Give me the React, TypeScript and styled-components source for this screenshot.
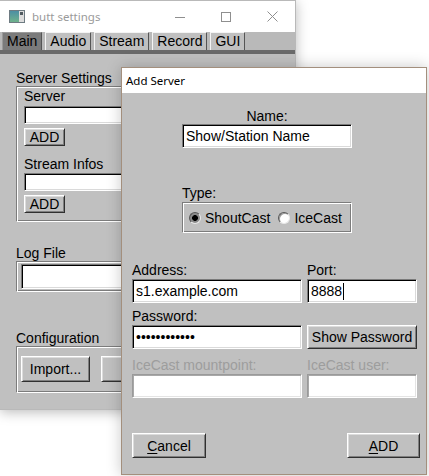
import React from 'react';
import styled, { createGlobalStyle } from 'styled-components';

const GlobalStyle = createGlobalStyle`
  html, body {
    margin: 0;
    padding: 0;
    background: #ffffff;
  }
  body {
    font-family: "Liberation Sans", Arial, sans-serif;
    font-size: 14px;
    color: #000;
  }
  * { box-sizing: border-box; }
`;

const Desktop = styled.div`
  position: relative;
  width: 429px;
  height: 476px;
  overflow: hidden;
  background: #ffffff;
`;

/* ---------- shared FLTK-ish widgets ---------- */

const Label = styled.div<{ $disabled?: boolean; $center?: boolean }>`
  height: 16px;
  line-height: 16px;
  white-space: nowrap;
  color: ${p => (p.$disabled ? '#9d9d9d' : '#000')};
  text-align: ${p => (p.$center ? 'center' : 'left')};
`;

const TextField = styled.div<{ $w?: number; $h?: number; $disabled?: boolean }>`
  width: ${p => (p.$w ? `${p.$w}px` : '100%')};
  height: ${p => p.$h ?? 24}px;
  background: #ffffff;
  border: 1px solid;
  border-color: ${p => (p.$disabled ? '#9a9a9a #ffffff #ffffff #9a9a9a' : '#7a7a7a #ffffff #ffffff #7a7a7a')};
  box-shadow: ${p =>
    p.$disabled
      ? 'inset 1px 1px 0 #a8a8a8, inset -1px -1px 0 #e4e4e4'
      : 'inset 1px 1px 0 #000000, inset -1px -1px 0 #dadada'};
  padding: 0 0 0 3px;
  display: flex;
  align-items: center;
  white-space: nowrap;
  overflow: hidden;
  flex-shrink: 0;
`;

const Caret = styled.span`
  display: inline-block;
  width: 1px;
  height: 17px;
  background: #000;
  margin-left: 1px;
`;

const Button = styled.div<{ $w: number; $h: number }>`
  width: ${p => p.$w}px;
  height: ${p => p.$h}px;
  background: #c0c0c0;
  border: 1px solid;
  border-color: #ffffff #303030 #303030 #ffffff;
  box-shadow: inset 1px 1px 0 #dcdcdc, inset -1px -1px 0 #7f7f7f;
  display: flex;
  align-items: center;
  justify-content: center;
  white-space: nowrap;
  flex-shrink: 0;
`;

const Groove = styled.div`
  border: 1px solid;
  border-color: #7c7c7c #ffffff #ffffff #7c7c7c;
  box-shadow: inset 1px 1px 0 #ffffff, inset -1px -1px 0 #7c7c7c;
`;

const Accel = styled.span`
  text-decoration: underline;
  text-underline-offset: 2px;
`;

/* ---------- main "butt settings" window ---------- */

const MainWindow = styled.div`
  position: absolute;
  left: 0;
  top: 0;
  width: 296px;
  height: 410px;
  border: 1px solid #b9b9b9;
  border-left: none;
  background: #c0c0c0;
  box-shadow: 0 2px 12px rgba(0, 0, 0, 0.28);
  display: flex;
  flex-direction: column;
`;

const TitleBar = styled.div`
  height: 31px;
  background: #ffffff;
  display: flex;
  align-items: center;
  flex-shrink: 0;
`;

const AppIcon = styled.svg`
  margin-left: 9px;
  flex-shrink: 0;
`;

const WindowTitle = styled.div`
  margin-left: 7px;
  font-family: "Noto Sans", "Open Sans", sans-serif;
  font-size: 11.5px;
  color: #9a9a9a;
  flex: 1;
`;

const CaptionButton = styled.div`
  width: 46px;
  height: 31px;
  display: flex;
  align-items: center;
  justify-content: center;
`;

const TabBar = styled.div`
  height: 18px;
  background: #b9b9b9;
  display: flex;
  gap: 3px;
  padding-left: 2px;
  flex-shrink: 0;
`;

const Tab = styled.div<{ $active?: boolean }>`
  height: 18px;
  padding: 0 4px;
  line-height: 17px;
  background: ${p => (p.$active ? '#7b7b7b' : '#c0c0c0')};
  border-top: 1px solid ${p => (p.$active ? '#9a9a9a' : '#f4f4f4')};
  border-left: 1px solid ${p => (p.$active ? '#9a9a9a' : '#f4f4f4')};
  border-right: 1px solid #555;
`;

const TabRule = styled.div`
  height: 4px;
  background: #6a6a6a;
  flex-shrink: 0;
`;

const MainBody = styled.div`
  padding: 16px 0 0 16px;
  display: flex;
  flex-direction: column;
`;

const GroupFrame = styled(Groove)<{ $pad: string }>`
  width: 264px;
  padding: ${p => p.$pad};
  display: flex;
  flex-direction: column;
`;

const Spaced = styled.div<{ $mt: number }>`
  margin-top: ${p => p.$mt}px;
`;

const ButtonRow = styled.div`
  display: flex;
  gap: 11px;
`;

/* ---------- "Add Server" dialog ---------- */

const Dialog = styled.div`
  position: absolute;
  left: 121px;
  top: 67px;
  width: 306px;
  height: 408px;
  border: 1px solid #a38f7d;
  background: #c0c0c0;
  box-shadow: 0 0 14px rgba(0, 0, 0, 0.22);
  display: flex;
  flex-direction: column;
`;

const DialogTitle = styled.div`
  height: 25px;
  background: #ffffff;
  padding-left: 4px;
  display: flex;
  align-items: center;
  font-family: "Noto Sans", "Open Sans", sans-serif;
  font-size: 11.5px;
  color: #000;
  flex-shrink: 0;
`;

const DialogBody = styled.div`
  padding: 15px 6px 0 10px;
  display: flex;
  flex-direction: column;
`;

const Block = styled.div<{ $mt?: number }>`
  width: 170px;
  margin-left: 50px;
  margin-top: ${p => p.$mt ?? 0}px;
  display: flex;
  flex-direction: column;
`;

const TypeBox = styled(Groove)`
  margin-top: 1px;
  height: 31px;
  display: flex;
  align-items: center;
  padding-left: 6px;
  gap: 8px;
`;

const RadioItem = styled.div`
  display: flex;
  align-items: center;
  gap: 4px;
`;

const RadioDot = styled.span<{ $on?: boolean }>`
  width: 12px;
  height: 12px;
  border-radius: 50%;
  border: 1px solid;
  border-color: #555 #e8e8e8 #e8e8e8 #555;
  background: ${p => (p.$on ? 'radial-gradient(circle, #000 0 2.6px, #8a8a8a 3.2px 100%)' : '#ffffff')};
  box-shadow: ${p => (p.$on ? 'none' : 'inset 1px 1px 0 #9a9a9a')};
  flex-shrink: 0;
`;

const FormRow = styled.div<{ $mt: number }>`
  margin-top: ${p => p.$mt}px;
  display: grid;
  grid-template-columns: 170px 110px;
  column-gap: 5px;
  align-items: end;
`;

const Field = styled.div`
  display: flex;
  flex-direction: column;
  gap: 1px;
`;

const DialogButtons = styled.div`
  margin-top: 35px;
  display: flex;
  justify-content: space-between;
`;

const ButtIcon = () => (
  <AppIcon width="16" height="13" viewBox="0 0 16 13">
    <defs>
      <linearGradient id="bi" x1="0" y1="0" x2="0" y2="1">
        <stop offset="0" stopColor="#4c8fa4" />
        <stop offset="1" stopColor="#6fb28c" />
      </linearGradient>
    </defs>
    <rect x="0.5" y="0.5" width="15" height="12" fill="#dcdcdc" stroke="#6e7b82" />
    <rect x="1" y="1" width="9" height="11" fill="url(#bi)" />
    <rect x="11" y="2" width="3" height="3" fill="#505a60" />
  </AppIcon>
);

const Minimize = () => (
  <svg width="10" height="10" viewBox="0 0 10 10">
    <line x1="0" y1="5.5" x2="10" y2="5.5" stroke="#8f8f8f" strokeWidth="1" />
  </svg>
);

const Maximize = () => (
  <svg width="10" height="10" viewBox="0 0 10 10">
    <rect x="0.5" y="0.5" width="9" height="9" fill="none" stroke="#8f8f8f" strokeWidth="1" />
  </svg>
);

const Close = () => (
  <svg width="11" height="11" viewBox="0 0 11 11">
    <path d="M0.5 0.5 L10.5 10.5 M10.5 0.5 L0.5 10.5" stroke="#8f8f8f" strokeWidth="1" />
  </svg>
);

const tabs = ['Main', 'Audio', 'Stream', 'Record', 'GUI'];

export default function App() {
  return (
    <>
      <GlobalStyle />
      <Desktop>
        <MainWindow>
          <TitleBar>
            <ButtIcon />
            <WindowTitle>butt settings</WindowTitle>
            <CaptionButton><Minimize /></CaptionButton>
            <CaptionButton><Maximize /></CaptionButton>
            <CaptionButton><Close /></CaptionButton>
          </TitleBar>
          <TabBar>
            {tabs.map(t => (
              <Tab key={t} $active={t === 'Main'}>{t}</Tab>
            ))}
          </TabBar>
          <TabRule />
          <MainBody>
            <Label>Server Settings</Label>
            <GroupFrame $pad="1px 8px 8px 7px">
              <Label>Server</Label>
              <Spaced $mt={2}><TextField $h={18} /></Spaced>
              <Spaced $mt={4}><Button $w={41} $h={18}>ADD</Button></Spaced>
              <Spaced $mt={10}><Label>Stream Infos</Label></Spaced>
              <Spaced $mt={1}><TextField $h={18} /></Spaced>
              <Spaced $mt={4}><Button $w={41} $h={18}>ADD</Button></Spaced>
            </GroupFrame>
            <Spaced $mt={23}><Label>Log File</Label></Spaced>
            <GroupFrame $pad="2px 6px 2px 4px">
              <TextField $h={25} />
            </GroupFrame>
            <Spaced $mt={38}><Label>Configuration</Label></Spaced>
            <GroupFrame $pad="9px 6px 10px 4px">
              <ButtonRow>
                <Button $w={69} $h={26}>Import...</Button>
                {/* second button lies under the dialog; its caption is not visible */}
                <Button $w={110} $h={26} />
              </ButtonRow>
            </GroupFrame>
          </MainBody>
        </MainWindow>

        <Dialog>
          <DialogTitle>Add Server</DialogTitle>
          <DialogBody>
            <Block>
              <Label $center>Name:</Label>
              <TextField $h={24}>Show/Station Name</TextField>
            </Block>
            <Block $mt={37}>
              <Label>Type:</Label>
              <TypeBox>
                <RadioItem><RadioDot $on />ShoutCast</RadioItem>
                <RadioItem><RadioDot />IceCast</RadioItem>
              </TypeBox>
            </Block>
            <FormRow $mt={29}>
              <Field>
                <Label>Address:</Label>
                <TextField>s1.example.com</TextField>
              </Field>
              <Field>
                <Label>Port:</Label>
                <TextField>8888<Caret /></TextField>
              </Field>
            </FormRow>
            <FormRow $mt={5}>
              <Field>
                <Label>Password:</Label>
                <TextField>••••••••••••</TextField>
              </Field>
              <Button $w={110} $h={24}>Show Password</Button>
            </FormRow>
            <FormRow $mt={8}>
              <Field>
                <Label $disabled>IceCast mountpoint:</Label>
                <TextField $disabled />
              </Field>
              <Field>
                <Label $disabled>IceCast user:</Label>
                <TextField $disabled />
              </Field>
            </FormRow>
            <DialogButtons>
              <Button $w={74} $h={25}><Accel>C</Accel>ancel</Button>
              <Button $w={73} $h={25}><Accel>A</Accel>DD</Button>
            </DialogButtons>
          </DialogBody>
        </Dialog>
      </Desktop>
    </>
  );
}
